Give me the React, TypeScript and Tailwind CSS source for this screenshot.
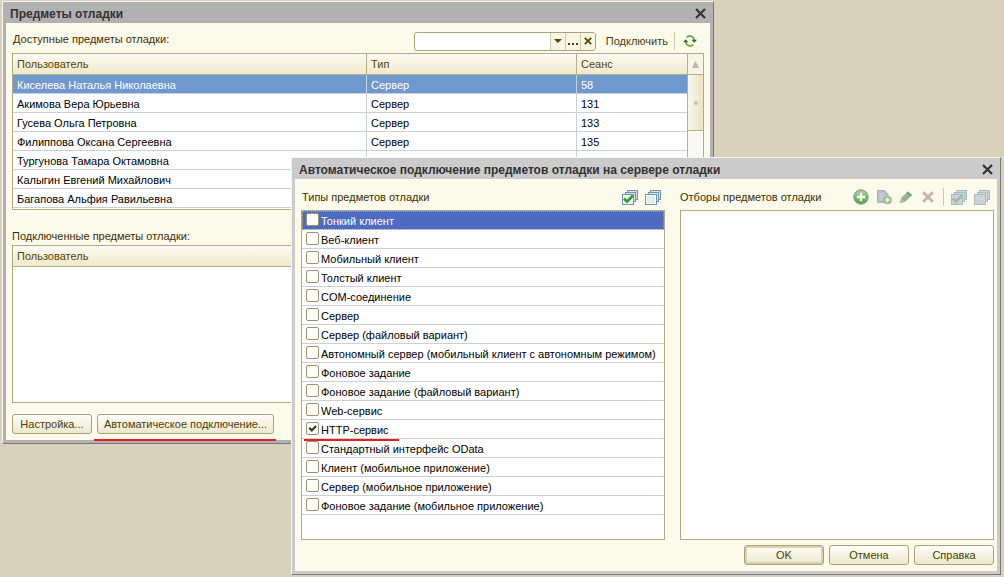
import React, { useState } from "react";
import { clsx } from "clsx";

const users = [
  { name: "Киселева Наталья Николаевна", type: "Сервер", session: 58 },
  { name: "Акимова Вера Юрьевна", type: "Сервер", session: 131 },
  { name: "Гусева Ольга Петровна", type: "Сервер", session: 133 },
  { name: "Филиппова Оксана Сергеевна", type: "Сервер", session: 135 },
  { name: "Тургунова Тамара Октамовна", type: "Сервер", session: 138 },
  { name: "Калыгин Евгений Михайлович", type: "Сервер", session: 140 },
  { name: "Багапова Альфия Равильевна", type: "Сервер", session: 142 },
];

const debugTypes = [
  "Тонкий клиент",
  "Веб-клиент",
  "Мобильный клиент",
  "Толстый клиент",
  "COM-соединение",
  "Сервер",
  "Сервер (файловый вариант)",
  "Автономный сервер (мобильный клиент с автономным режимом)",
  "Фоновое задание",
  "Фоновое задание (файловый вариант)",
  "Web-сервис",
  "HTTP-сервис",
  "Стандартный интерфейс OData",
  "Клиент (мобильное приложение)",
  "Сервер (мобильное приложение)",
  "Фоновое задание (мобильное приложение)",
];

const CloseIcon = () => (
  <svg width="11" height="11" viewBox="0 0 11 11" fill="none" stroke="#333" strokeWidth="2.2">
    <path d="M1 1 10 10M10 1 1 10" />
  </svg>
);

const RefreshIcon = () => (
  <svg width="14" height="12" viewBox="0 0 14 12" fill="none">
    <path d="M3.6 2.4C6 .2 10.8.8 11.4 5.4" stroke="#5fa34c" strokeWidth="1.6" />
    <path d="M8.6 4.8H14L11.3 7.8Z" fill="#1f7a12" />
    <path d="M10.4 9.6C8 11.8 3.2 11.2 2.6 6.6" stroke="#5fa34c" strokeWidth="1.6" />
    <path d="M0 7.2H5.4L2.7 4.2Z" fill="#1f7a12" />
  </svg>
);

const StackIcon = ({ checked, dim }: { checked?: boolean; dim?: boolean }) => (
  <svg width="16" height="16" viewBox="0 0 16 16" className={clsx(dim && "opacity-60")}>
    <rect x="5.5" y="1.5" width="10" height="9" fill={dim ? "#b4c2cd" : "#d6e6ee"} stroke="#6d93aa" />
    <rect x="3.5" y="3.5" width="10" height="9" fill={dim ? "#b4c2cd" : "#d6e6ee"} stroke="#6d93aa" />
    <rect x="0.5" y="5.5" width="11" height="10" fill={dim ? "#a9bccb" : "#fff"} stroke="#6d93aa" />
    <rect x="2" y="7" width="8" height="7" fill={dim ? "#a9bccb" : "#e3ecf5"} />
    {checked && (
      <path d="M2 9.6 5 12.6 10.8 6.6" fill="none" stroke={dim ? "#5d9272" : "#2fa01c"} strokeWidth="2.6" />
    )}
  </svg>
);

const AddIcon = () => (
  <svg width="16" height="16" viewBox="0 0 16 16">
    <defs>
      <linearGradient id="add" x2="0" y2="1">
        <stop stopColor="#a4d49a" />
        <stop offset="1" stopColor="#4caa3c" />
      </linearGradient>
    </defs>
    <circle cx="8" cy="8" r="7.2" fill="url(#add)" stroke="#7e9a78" />
    <path d="M8 3.8V12.2M3.8 8H12.2" stroke="#fff" strokeWidth="2.4" />
  </svg>
);

const CopyAddIcon = () => (
  <svg width="16" height="16" viewBox="0 0 16 16">
    <path d="M1.5 1.5H8.5L12 5V13.5H1.5Z" fill="#b4c1c8" stroke="#a3b2b8" />
    <path d="M3.5 5H8M3.5 7.5H9M3.5 10H7" stroke="#cdd6d8" />
    <circle cx="11.5" cy="11" r="4" fill="#a4c6a0" stroke="#a1b79c" />
    <path d="M11.5 8.8V13.2M9.3 11H13.7" stroke="#eff4e8" strokeWidth="1.4" />
  </svg>
);

const PencilIcon = () => (
  <svg width="14" height="14" viewBox="0 0 14 14">
    <path d="M1 13 2.2 7.8 8.8 1.4 13 5 6.4 11.8Z" fill="#8fae92" />
    <path d="M1 13 2.2 7.8 6.4 11.8Z" fill="#b3bba6" />
    <path d="M3.5 8.8 9.8 2.6" stroke="#b0c8b0" />
    <path d="M8.8 1.4 13 5 11.4 6.6 7.3 2.9Z" fill="#7d9d84" />
  </svg>
);

const DeleteIcon = () => (
  <svg width="12" height="12" viewBox="0 0 12 12" fill="none" stroke="#c6b2ab" strokeWidth="2.8">
    <path d="M1.2 1.2 10.8 10.8M10.8 1.2 1.2 10.8" />
  </svg>
);

interface WindowProps {
  title: string;
  active?: boolean;
  className?: string;
  children: React.ReactNode;
}

const Window = ({ title, active, className, children }: WindowProps) => (
  <section
    className={clsx(
      "absolute border border-t-[#f6f4ea] border-l-[#f6f4ea] border-r-[#77777a] border-b-[#77777a]",
      active ? "bg-[#cbcbcb]" : "bg-[#b1b1b1]",
      className
    )}
  >
    <header className="flex h-[21px] items-center justify-between pt-0.5 pr-[7px] pl-[7px]">
      <h2 className="text-xs leading-4 font-bold whitespace-nowrap text-[#333]">{title}</h2>
      <button type="button" aria-label="Закрыть">
        <CloseIcon />
      </button>
    </header>
    <div className="mx-[3px] mb-[3px] bg-[#fcfaeb]">{children}</div>
  </section>
);

interface PushButtonProps {
  primary?: boolean;
  className?: string;
  children: React.ReactNode;
}

const PushButton = ({ primary, className, children }: PushButtonProps) => (
  <button
    type="button"
    className={clsx(
      "h-5 rounded-[3px] border border-[#a9a27c] bg-linear-to-b from-[#fefefa] to-[#ece8cc] leading-4 whitespace-nowrap text-[#4d3d00]",
      primary && "shadow-[inset_0_0_0_2px_#d9d2a8]",
      className
    )}
  >
    {children}
  </button>
);

const headCell =
  "h-[21px] border-b border-[#b9b086] bg-linear-to-b from-[#fcfbf3] to-[#f0e9cb] px-1 text-left font-normal text-[#574500]";

const bodyCell = "h-[19px] border-b border-[#c8d0d8] px-1 pt-0.5";

const DebugItemsWindow = () => {
  const [selected, setSelected] = useState(0);

  return (
    <Window title="Предметы отладки" className="top-px right-[290px] left-0.5">
      <div className="px-1.5 pb-1.5">
        <div className="flex h-[30px] items-center justify-between pt-1.5 pl-px">
          <span className="pb-1">Доступные предметы отладки:</span>
          <div className="flex items-center gap-2.5">
            <div className="flex h-[19px] w-[182px] overflow-hidden rounded-[3px] border border-[#a9a27c] bg-white">
              <input aria-label="Поиск предмета отладки" className="min-w-0 flex-1 px-1 outline-none" />
              <button type="button" aria-label="Выбрать из списка" className="flex w-[15px] items-center justify-center border-l border-[#cfc9a6] bg-[#f7f5e4]">
                <svg width="8" height="4" viewBox="0 0 8 4">
                  <path d="M0 0H8L4 4Z" fill="#574500" />
                </svg>
              </button>
              <button type="button" aria-label="Выбрать" className="flex w-[15px] items-center justify-center border-l border-[#cfc9a6] bg-[#f7f5e4] pt-1.5">
                <svg width="10" height="2" viewBox="0 0 10 2">
                  <path d="M0 0H2V2H0ZM4 0H6V2H4ZM8 0H10V2H8Z" fill="#574500" />
                </svg>
              </button>
              <button type="button" aria-label="Очистить" className="flex w-[15px] items-center justify-center border-l border-[#cfc9a6] bg-[#f7f5e4]">
                <svg width="8" height="8" viewBox="0 0 8 8" stroke="#574500" strokeWidth="1.8">
                  <path d="M.8.8 7.2 7.2M7.2.8.8 7.2" />
                </svg>
              </button>
            </div>
            <button type="button" className="text-[#4d3d00]">
              Подключить
            </button>
            <div className="-ml-1 h-[18px] border-l border-[#cfc9a6]" />
            <button type="button" aria-label="Обновить" className="-ml-0.5 pr-[7px]">
              <RefreshIcon />
            </button>
          </div>
        </div>

        <div className="flex border border-[#b3aa80] bg-white">
          <table className="mb-px w-full table-fixed border-separate border-spacing-0">
            <colgroup>
              <col />
              <col className="w-[210px]" />
              <col className="w-[110px]" />
            </colgroup>
            <thead>
              <tr>
                <th className={clsx(headCell, "border-r")}>Пользователь</th>
                <th className={clsx(headCell, "border-r")}>Тип</th>
                <th className={headCell}>Сеанс</th>
              </tr>
            </thead>
            <tbody className="text-black">
              {users.map((user, index) => (
                <tr
                  key={user.name}
                  onClick={() => setSelected(index)}
                  className={clsx(index === selected && "bg-[#6f98cf] text-white")}
                >
                  <td className={clsx(bodyCell, "border-r")}>{user.name}</td>
                  <td className={clsx(bodyCell, "border-r")}>{user.type}</td>
                  <td className={bodyCell}>{user.session}</td>
                </tr>
              ))}
            </tbody>
          </table>
          <div className="w-4 shrink-0 border-l border-[#b9b086] bg-[#f9f8f2]">
            <div className="flex h-[21px] items-center justify-center border-b border-[#b9b086] bg-[#f6f4e6]">
              <svg width="7" height="7" viewBox="0 0 7 7">
                <path d="M3.5 0 7 7H0Z" fill="#bdb9a8" />
              </svg>
            </div>
            <div className="flex h-14 items-center justify-center border-b border-[#b9b086] bg-linear-to-r from-[#faf8ec] to-[#e9e3c2]">
              <div className="size-1 rounded-full bg-[#cbc5aa]" />
            </div>
          </div>
        </div>

        <div className="flex h-[35px] items-end pb-px">Подключенные предметы отладки:</div>

        <div className="h-[158px] border border-[#b3aa80] bg-white">
          <table className="w-full border-separate border-spacing-0">
            <thead>
              <tr>
                <th className={headCell}>Пользователь</th>
              </tr>
            </thead>
          </table>
        </div>

        <div className="flex gap-[5px] pt-[11px]">
          <PushButton className="w-20">Настройка...</PushButton>
          <div className="relative flex">
            <PushButton className="w-[177px]">Автоматическое подключение...</PushButton>
            <div className="absolute -right-0.5 -bottom-[7px] -left-[3px] h-0.5 bg-[#e3201b]" />
          </div>
        </div>
      </div>
    </Window>
  );
};

const AutoConnectWindow = () => {
  const [selected, setSelected] = useState(0);
  const [checked, setChecked] = useState<string[]>(["HTTP-сервис"]);

  const toggle = (type: string) => {
    setChecked((prev) => (prev.includes(type) ? prev.filter((item) => item !== type) : [...prev, type]));
  };

  return (
    <Window
      title="Автоматическое подключение предметов отладки на сервере отладки"
      active
      className="top-[157px] right-[3px] left-[291px]"
    >
      <div className="px-1.5 pr-[3px] pb-1.5">
        <div className="flex gap-[15px]">
          <div className="flex min-w-0 flex-1 flex-col">
            <div className="flex h-[31px] items-center justify-between pt-1 pr-1 pl-px">
              <span>Типы предметов отладки</span>
              <div className="flex gap-[7px]">
                <button type="button" aria-label="Установить все">
                  <StackIcon checked />
                </button>
                <button type="button" aria-label="Снять все">
                  <StackIcon />
                </button>
              </div>
            </div>
            <ul className="h-[330px] border border-[#b3aa80] bg-white text-black">
              {debugTypes.map((type, index) => (
                <li
                  key={type}
                  onClick={() => setSelected(index)}
                  className={clsx(
                    "relative h-[19px] border-b border-[#c8d0d8]",
                    index === selected && "bg-[#4f6ac1] text-white outline-1 -outline-offset-1 outline-[#c0a850] outline-dotted"
                  )}
                >
                  <label className="flex h-full items-start pt-0.5 pl-1 whitespace-nowrap">
                    <span className="relative mr-0.5 size-[13px]">
                      <input
                        type="checkbox"
                        checked={checked.includes(type)}
                        onChange={() => toggle(type)}
                        className="peer block size-[13px] appearance-none rounded-[2px] border border-[#9c9468] bg-white"
                      />
                      <svg
                        viewBox="0 0 13 13"
                        className="pointer-events-none absolute inset-0 hidden size-[13px] peer-checked:block"
                      >
                        <path d="M3.2 5.8 5.8 8.4 10 4" fill="none" stroke="#333" strokeWidth="2.2" />
                      </svg>
                    </span>
                    <span>{type}</span>
                  </label>
                  {type === "HTTP-сервис" && (
                    <div className="absolute -bottom-[3px] left-0.5 z-10 h-0.5 w-[95px] bg-[#e3201b]" />
                  )}
                </li>
              ))}
            </ul>
          </div>

          <div className="flex w-[314px] shrink-0 flex-col">
            <div className="flex h-[31px] items-center justify-between pt-1 pr-1">
              <span className="whitespace-nowrap">Отборы предметов отладки</span>
              <div className="flex items-center gap-[7px]">
                <button type="button" aria-label="Добавить">
                  <AddIcon />
                </button>
                <button type="button" aria-label="Скопировать">
                  <CopyAddIcon />
                </button>
                <button type="button" aria-label="Изменить">
                  <PencilIcon />
                </button>
                <button type="button" aria-label="Удалить" className="px-0.5">
                  <DeleteIcon />
                </button>
                <div className="h-[18px] border-l border-[#d2c6ae]" />
                <button type="button" aria-label="Установить все отборы">
                  <StackIcon checked dim />
                </button>
                <button type="button" aria-label="Снять все отборы">
                  <StackIcon dim />
                </button>
              </div>
            </div>
            <div className="flex-1 border border-[#b3aa80] bg-white" />
          </div>
        </div>

        <div className="flex justify-end gap-[5px] pt-[5px]">
          <PushButton primary className="w-20">
            OK
          </PushButton>
          <PushButton className="w-20">Отмена</PushButton>
          <PushButton className="w-20">Справка</PushButton>
        </div>
      </div>
    </Window>
  );
};

const App = () => {
  return (
    <main className="relative min-h-screen bg-[#d8d2bd] font-['Liberation_Sans',Arial,sans-serif] text-[11px] leading-4 text-[#3d2f00]">
      <DebugItemsWindow />
      <AutoConnectWindow />
    </main>
  );
};

export default App;
